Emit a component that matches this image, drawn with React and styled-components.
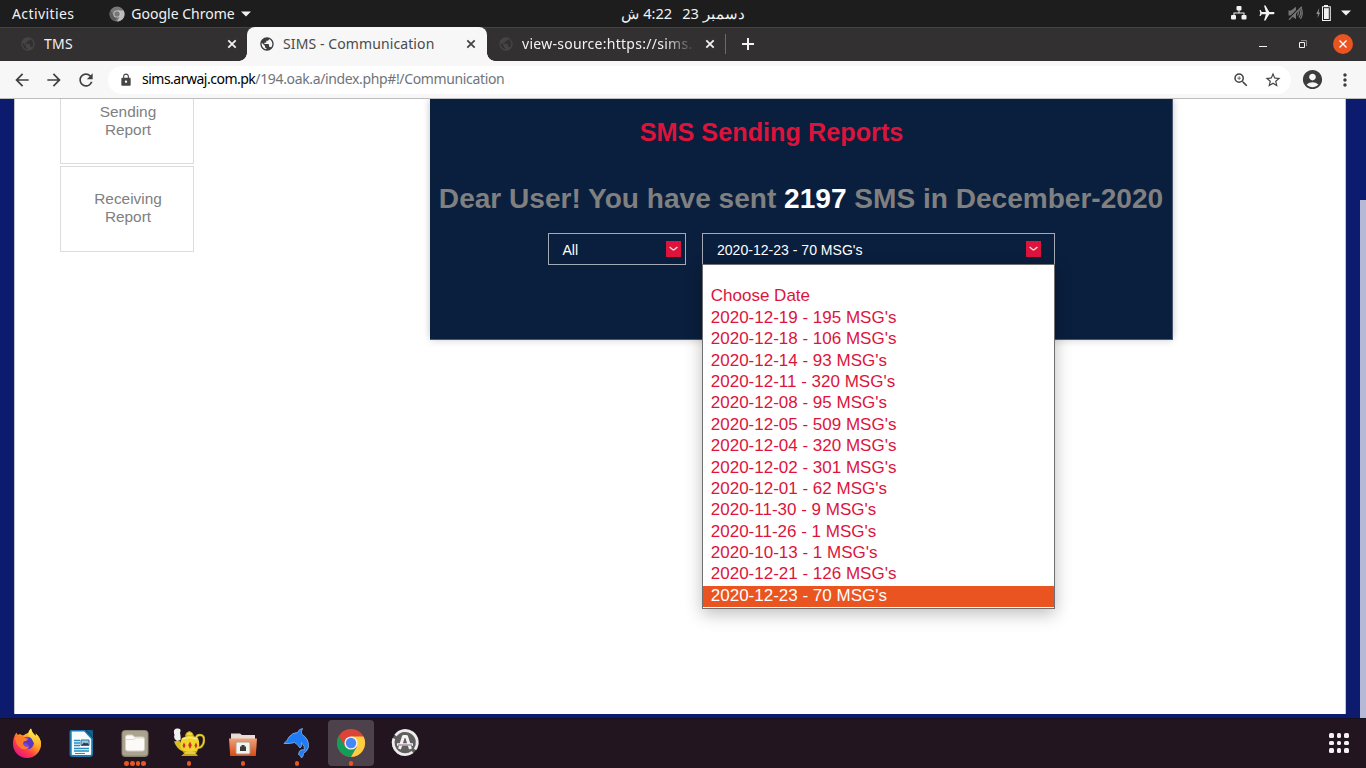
import React from "react";
import styled, { createGlobalStyle } from "styled-components";
import {
  MdPublic, MdArrowBack, MdArrowForward, MdRefresh, MdLock,
  MdZoomIn, MdStarBorder, MdAccountCircle, MdMoreVert, MdAirplanemodeActive,
} from "react-icons/md";

const GlobalStyle = createGlobalStyle`
  * { box-sizing: border-box; }
  html, body { margin: 0; padding: 0; }
  body { width: 1366px; height: 768px; overflow: hidden; font-family: "Liberation Sans", Arial, sans-serif; }
  svg { display: block; flex: none; }
`;

const Desktop = styled.div`
  width: 1366px;
  height: 768px;
  display: grid;
  grid-template-rows: 27px 34px 38px 619px 50px;
  overflow: hidden;
`;

const UiText = styled.span`
  font-family: "Noto Sans", "Open Sans", sans-serif;
  font-size: ${(p) => p.$size || 14}px;
  letter-spacing: ${(p) => p.$spacing || 0}px;
  line-height: 20px;
  color: ${(p) => p.$color || "#f2f2f2"};
  white-space: pre;
`;

/* ---------- system bar ---------- */
const SystemBar = styled.header`
  display: grid;
  grid-template-columns: 1fr auto 1fr;
  background: #1d1d1d;
  height: 27px;
  align-items: center;
`;
const SystemLeft = styled.div`
  display: flex;
  align-items: center;
  padding-left: 12px;
`;
const AppMenu = styled.div`
  display: flex;
  align-items: center;
  margin-left: 35px;
  gap: 6px;
`;
const Clock = styled.div`
  display: flex;
  gap: 10px;
  align-items: center;
  padding-bottom: 1px;
`;
const SystemTray = styled.div`
  display: flex;
  justify-content: flex-end;
  align-items: center;
  padding: 0 15px 1px 0;
`;
const TraySlot = styled.div`
  margin-left: ${(p) => p.$gap}px;
  transform: rotate(${(p) => p.$turn || 0}deg);
`;

/* ---------- tab strip ---------- */
const TabStrip = styled.nav`
  display: flex;
  background: #333031;
  border-top: 1px solid #464344;
`;
const Tab = styled.div`
  position: relative;
  display: flex;
  align-items: center;
  width: ${(p) => p.$width}px;
  padding: 0 ${(p) => p.$right}px ${(p) => (p.$active ? 0 : 1)}px ${(p) => p.$left}px;
  gap: 8px;
  background: ${(p) => (p.$active ? "#f7f7f7" : "transparent")};
  border-radius: 8px 8px 0 0;
  margin-top: ${(p) => (p.$active ? -1 : 0)}px;
  &::before, &::after {
    content: "";
    display: ${(p) => (p.$active ? "block" : "none")};
    position: absolute;
    bottom: 0;
    width: 8px;
    height: 8px;
  }
  &::before { left: -8px; background: radial-gradient(circle at 0 0, transparent 7.5px, #f7f7f7 8px); }
  &::after { right: -8px; background: radial-gradient(circle at 100% 0, transparent 7.5px, #f7f7f7 8px); }
`;
const TabTitle = styled.div`
  flex: 1;
  min-width: 0;
  overflow: hidden;
  display: flex;
  mask-image: ${(p) => (p.$fade ? "linear-gradient(to right, #000 82%, transparent 100%)" : "none")};
`;
const TabDivider = styled.div`
  width: 1px;
  height: 20px;
  margin: 6px 15px 0 0;
  background: #6d6a6b;
`;
const NewTab = styled.div`
  display: flex;
  align-items: center;
  padding-bottom: 1px;
`;
const WindowControls = styled.div`
  display: flex;
  align-items: center;
  margin-left: auto;
  padding: 0 13px 1px 0;
`;
const CloseWindow = styled.div`
  display: flex;
  align-items: center;
  justify-content: center;
  width: 20px;
  height: 20px;
  margin-left: 26px;
  border-radius: 50%;
  background: #e95420;
`;

/* ---------- toolbar ---------- */
const Toolbar = styled.div`
  display: flex;
  align-items: center;
  background: #f7f7f7;
  border-bottom: 1px solid #bdbdbd;
  padding: 0 11px 0 12px;
`;
const NavButtons = styled.div`
  display: flex;
  gap: 12px;
  color: #404040;
`;
const AddressBar = styled.div`
  display: flex;
  align-items: center;
  flex: 1;
  height: 28px;
  margin-left: 12px;
  padding: 0 9px 0 11px;
  border-radius: 14px;
  background: #fff;
  color: #454545;
`;
const Url = styled.div`
  flex: 1;
  display: flex;
  margin-left: 9px;
  padding-bottom: 1px;
`;
const AddressActions = styled.div`
  display: flex;
  align-items: center;
  gap: 14px;
`;
const ToolbarEnd = styled.div`
  display: flex;
  align-items: center;
  gap: 11px;
  margin-left: 10px;
  color: #3c3c3f;
`;

/* ---------- page ---------- */
const Viewport = styled.main`
  display: flex;
  overflow: hidden;
  background: #0c1b6e;
  padding: 0 0 4px 14px;
`;
const Page = styled.div`
  display: flex;
  align-items: flex-start;
  width: 1332px;
  background: #fff;
  border-left: 1px solid #c4c4c4;
  border-right: 1px solid #c4c4c4;
`;
const ScrollTrack = styled.div`
  width: 6px;
  margin: 101px 0 -4px 14px;
  background: #b5b9d6;
`;
const SideMenu = styled.div`
  display: flex;
  flex-direction: column;
  gap: 2px;
  width: 134px;
  margin-left: 45px;
`;
const SideCard = styled.div`
  height: ${(p) => p.$height}px;
  padding: ${(p) => p.$top}px 0 0 2px;
  border: 1px solid #dcdcdc;
  border-top-width: ${(p) => (p.$open ? 0 : 1)}px;
  color: #808080;
  font-size: 15.4px;
  line-height: 18px;
  text-align: center;
  white-space: pre-line;
`;
const Panel = styled.section`
  display: flex;
  flex-direction: column;
  align-items: center;
  width: 743px;
  height: 241px;
  margin-left: 236px;
  background: #0a1f3d;
  border: 1px solid #4b5470;
  border-width: 0 1px 1px 0;
  box-shadow: 0 -4px 8px rgba(0, 0, 0, 0.14), 0 2px 7px rgba(0, 0, 0, 0.1);
`;
const PanelTitle = styled.h2`
  margin: 19px 59px 0 0;
  color: #dc143c;
  font-size: 25.25px;
  line-height: 28px;
`;
const Summary = styled.h1`
  margin: 36px 0 0;
  color: #808080;
  font-size: 28.07px;
  line-height: 34px;
  white-space: nowrap;
`;
const Count = styled.span`
  color: #fff;
`;
const Filters = styled.div`
  display: flex;
  gap: 16px;
  margin-top: 17px;
`;
const Select = styled.div`
  position: relative;
  display: flex;
  align-items: center;
  justify-content: space-between;
  width: ${(p) => p.$width}px;
  height: 32px;
  padding: 1px ${(p) => p.$right}px 0 ${(p) => p.$left}px;
  border: 1px solid #a3a9b5;
  color: #fff;
  font-size: 14.05px;
`;
const Chevron = styled.div`
  display: flex;
  align-items: center;
  justify-content: center;
  width: 15px;
  height: 16px;
  background: #dc143c;
  margin-top: -2px;
`;
const OptionList = styled.div`
  position: absolute;
  top: 30px;
  left: -1px;
  width: 353px;
  height: 345px;
  border: 1px solid #6f6f72;
  background: #fff;
  box-shadow: 0 5px 16px rgba(0, 0, 0, 0.26);
`;
const Option = styled.div`
  height: 21.4px;
  padding-left: 8.3px;
  color: ${(p) => (p.$selected ? "#fff" : "#dc143c")};
  background: ${(p) => (p.$selected ? "#e95420" : "transparent")};
  font-size: 17px;
  line-height: 20px;
`;

/* ---------- dock ---------- */
const Dock = styled.footer`
  display: flex;
  align-items: center;
  background: #22151f;
  border-top: 1px solid #160f1c;
  padding: 0 17px 1px 4px;
`;
const DockItem = styled.div`
  display: flex;
  flex-direction: column;
  align-items: center;
  width: 46px;
  height: 46px;
  margin-right: 8px;
  padding-top: 8px;
  border-radius: 4px;
  background: ${(p) => (p.$active ? "#4d424b" : "transparent")};
`;
const Dots = styled.div`
  display: flex;
  gap: 1px;
  height: 5px;
  margin-top: 3px;
`;
const Dot = styled.i`
  width: 4.6px;
  height: 4.6px;
  border-radius: 50%;
  background: #e95420;
`;
const AppGrid = styled.div`
  display: grid;
  grid-template-columns: repeat(3, 4.6px);
  gap: 3px;
  margin-left: auto;
`;
const GridDot = styled.i`
  width: 4.6px;
  height: 4.6px;
  border-radius: 1.5px;
  background: #f2f0f2;
`;

const Caret = () => (
  <svg width="10" height="6" viewBox="0 0 10 6"><path d="M0 .5h10L5 5.5z" fill="#f2f2f2" /></svg>
);

const CloseIcon = ({ color }) => (
  <svg width="14" height="14" viewBox="0 0 14 14"><path d="m3.300 3.300 7.400 7.400m0-7.400-7.400 7.400" stroke={color} strokeWidth="1.800" /></svg>
);

const GreyChrome = () => (
  <svg width="16" height="16" viewBox="0 0 16 16">
    <circle cx="8" cy="8" r="7.5" fill="#777" />
    <path d="M8 4.5h6.7A7.5 7.5 0 0 1 8 15.5L11 10z" fill="#bdbdbd" />
    <path d="M1.5 4.3 5 10l3 1.5-2 3.7A7.5 7.5 0 0 1 1.5 4.3z" fill="#5c5c5c" />
    <circle cx="8" cy="8" r="3.6" fill="#ccc" />
    <circle cx="8" cy="8" r="2.7" fill="#777" />
  </svg>
);

const NetworkIcon = () => (
  <svg width="16" height="14" viewBox="0 0 16 14" fill="#f2f2f2">
    <rect x="5.5" y="0" width="5" height="4.5" rx="1" />
    <rect x="0" y="9" width="5" height="4.5" rx="1" />
    <rect x="10.5" y="9" width="5" height="4.5" rx="1" />
    <path d="M7.5 4h1v2.5h5V9h-1V7.5h-9V9h-1V6.5h5z" />
  </svg>
);

const MutedIcon = () => (
  <svg width="15" height="14" viewBox="0 0 15 14" fill="none" stroke="#747474" strokeWidth="1.3">
    <path d="M.5 4.5h2.500L8 .8v12.400L3 9.500H.5z" fill="#747474" stroke="none" />
    <path d="M9.500 4.500q1.600 2.500 0 5M11 2.500q3.300 4.500 0 9M12.500.7q3.500 6.300 0 12.200" />
    <path d="M.5 12.500 13 0" stroke="#1d1d1d" strokeWidth="1.200" />
    <path d="M1 13.800 13.800.8" />
  </svg>
);

const BatteryIcon = () => (
  <svg width="15" height="16" viewBox="0 0 15 16">
    <path d="M3.300 3 .2 9h1.800L1.500 13 4.300 7.500H2.700z" fill="#8c8c8c" />
    <path d="M8 0h4v1.200h2.800V16H6V1.200h2z" fill="#f2f2f2" />
    <path d="M7 2.200h6.800V15H7z" fill="#1d1d1d" />
    <path d="M8 3.200h4.800V14H8z" fill="#f2f2f2" />
  </svg>
);

const ChevronIcon = () => (
  <svg width="9" height="5" viewBox="0 0 9 5"><path d="M.6.900 3.600 3.400q.9.700 1.800 0L8.400.9" fill="none" stroke="#f9dde3" strokeWidth="1.300" /></svg>
);

const Firefox = () => (
  <svg width="30" height="30" viewBox="0 0 30 30">
    <defs>
      <linearGradient id="foxBody" x1=".85" y1=".1" x2=".2" y2=".95">
        <stop offset="0" stopColor="#fff14f" /><stop offset=".4" stopColor="#ff9a22" />
        <stop offset=".7" stopColor="#ff3b47" /><stop offset="1" stopColor="#e31587" />
      </linearGradient>
      <linearGradient id="foxTail" x1=".5" y1="0" x2=".5" y2="1">
        <stop offset="0" stopColor="#fff44f" /><stop offset=".6" stopColor="#ffb52c" /><stop offset="1" stopColor="#ff6a35" stopOpacity="0" />
      </linearGradient>
    </defs>
    <path d="M4.500 4.500Q5 8 8 6q1.500 1 3 1.500Q15 5 16 5q1-3 3-4.500Q20 5 24 8q0-1.500-.4-2.500Q29 10 29 16A14 14 0 0 1 1 16Q1 9 4.500 4.500z" fill="url(#foxBody)" />
    <circle cx="15" cy="15" r="6.300" fill="#7542e5" />
    <path d="M10 12q5 1 8-3 4 2 4 6-1 5-5 6 1-5-3-6-3 1-4-3z" fill="#5a38bd" />
    <path d="M3 10q4-3 8-1.500 2 1.500 5 2.500-1 2-4 2.500-2 2 0 4 2 2 5 1-2 4-7 2.500Q4 18 3 10z" fill="#ff7b2c" />
    <path d="M19 .5Q20 5 24 8q0-1.500-.4-2.500Q29 10 29 16q-.5 7-5 10 0-12-7-18-1-4 2-7.500z" fill="url(#foxTail)" />
  </svg>
);

const Writer = () => (
  <svg width="30" height="30" viewBox="0 0 30 30">
    <path d="M5 2h14l8 8v16a3 3 0 0 1-3 3H6.500a3 3 0 0 1-3-3V4a2 2 0 0 1 1.500-2z" fill="#1d78ad" />
    <path d="M5.700 3.500h12.500l7 7.500v15q0 1-1 1H6.700q-1 0-1-1z" fill="#f6fbfd" />
    <path d="M19.500 2H26q1 0 1 1v6.500z" fill="#125e8c" />
    <path d="M8 12.500h6M8 15h6M8 17.500h6M8 20.500h15M8 23h15" stroke="#288dbe" strokeWidth="1.300" />
    <path d="M15 12h8v5.500h-8z" fill="#9cc9e7" stroke="#28709b" />
    <path d="m15.500 17 2.500-2.500 2 1 1-1 2 2.500z" fill="#2a3d49" />
    <path d="M9 25.500h10" stroke="#288dbe" />
  </svg>
);

const Files = () => (
  <svg width="30" height="30" viewBox="0 0 30 30">
    <rect x="1.500" y="2" width="27" height="27" rx="4" fill="#8b8473" />
    <rect x="2.500" y="3" width="25" height="24.500" rx="3" fill="#aaa38f" />
    <path d="M7.500 7h5l2 2h8q2 0 2 2v10q0 2-2 2h-15q-2 0-2-2V9q0-2 2-2z" fill="#fbfaf8" stroke="#d4cfc3" />
    <path d="M6 11.500h8l2-1.500h8" fill="none" stroke="#ddd8cc" />
  </svg>
);

const Teapot = () => (
  <svg width="32" height="30" viewBox="0 0 32 30">
    <path d="M4 13Q0 11 1.500 7-.5 1 4 .5 9 0 7 5q1 3 .5 7z" fill="#f1f1ef" />
    <path d="M23 11q0-4 4-4 4.500 0 4 6-1 7-7 7" fill="none" stroke="#a58c17" strokeWidth="2.500" />
    <path d="M23 11q0-4 4-4 4.500 0 4 6-1 7-7 7" fill="none" stroke="#e8d34a" strokeWidth="1.300" />
    <path d="m1 13.500 5-1 5 6-1 5q-6-2-9-10z" fill="#d9bd24" />
    <path d="M12.500 8q0-4 4-4.500 3.500.5 4 4.500z" fill="#f0dc3c" stroke="#b89610" />
    <path d="M9 10q8-5 16 0 3 7-1 13-7 4-14 0-5-6-1-13z" fill="#efd52f" />
    <path d="M9 22q8 4 16 0l-2 3.500 2 2.500H8l3-2.500z" fill="#c6a516" />
    <path d="m11 14.500 1.500 3-1.500 3-1.500-3zm6-1 1.800 3.800L17 21l-1.800-3.700zm6 1 1.300 3-1.300 3-1.500-3z" fill="#d72b24" />
    <path d="M9 11q8-3 15 0M12 25h10" fill="none" stroke="#fff28a" />
  </svg>
);

const NetFolder = () => (
  <svg width="30" height="30" viewBox="0 0 30 30">
    <defs><linearGradient id="folder" x1="0" x2="0" y1="0" y2="1"><stop stopColor="#eda27c" /><stop offset="1" stopColor="#dc4a12" /></linearGradient></defs>
    <path d="M3 5.500h9l2 1.500h13v21H3z" fill="#e9dcd6" />
    <path d="M1 10.500h28L27.800 28H2.200z" fill="url(#folder)" />
    <rect x="8" y="14" width="14" height="12" rx="1.500" fill="#f4f4ef" stroke="#a5a095" />
    <path d="M12 18.500h1.500V17h3v1.500H18V23h-6z" fill="#3b3b37" />
  </svg>
);

const Dolphin = () => (
  <svg width="30" height="30" viewBox="0 0 30 30">
    <path d="M2 15.500Q5.500 12.500 7 9q3.500-4.500 8.500-4.500Q17 1 20.500.5 18.500 4 20 6.500q7 4 6.500 12.500-1 4-5 6.500 0 3-2 4.500-.5-2.500-3-3.500.5-4 2.500-4.500 2-.5 3.500 0 .5-4-3-7.500 1 4-1.500 5.500-2-3.500-5.500-5.500Q8 16 2 15.500z" fill="#207cf6" stroke="#8bb5d9" strokeWidth=".8" />
  </svg>
);

const Chrome = () => (
  <svg width="30" height="30" viewBox="0 0 30 30">
    <circle cx="15" cy="15" r="14" fill="#db4437" />
    <path d="M2.900 8A14 14 0 0 0 15 29l6-10.500L15 22 9 18.500z" fill="#139d58" />
    <path d="M15 8.500h12.500A14 14 0 0 1 15 29l6-10.500z" fill="#ffcd41" />
    <circle cx="15" cy="15" r="6.600" fill="#f3f3f3" />
    <circle cx="15" cy="15" r="5.200" fill="#4587f4" />
  </svg>
);

const Updater = () => (
  <svg width="30" height="30" viewBox="0 0 30 30">
    <circle cx="15" cy="15" r="13" fill="#5f5f5f" />
    <path d="M5.500 7.500A12 12 0 0 1 25 21.500M22.500 24A12 12 0 0 1 3.800 10.500" fill="none" stroke="#ececec" strokeWidth="2.800" />
    <path d="m9.500 21 4-12.500h3l4 12.500" fill="none" stroke="#f2f2f2" strokeWidth="3" strokeLinejoin="round" />
    <path d="M7 16.500h16" stroke="#f2f2f2" strokeWidth="2.500" />
    <path d="M8 17h14" stroke="#8b4b82" strokeWidth=".9" />
  </svg>
);

const options = [
  " ", "Choose Date", "2020-12-19 - 195 MSG's", "2020-12-18 - 106 MSG's",
  "2020-12-14 - 93 MSG's", "2020-12-11 - 320 MSG's", "2020-12-08 - 95 MSG's",
  "2020-12-05 - 509 MSG's", "2020-12-04 - 320 MSG's", "2020-12-02 - 301 MSG's",
  "2020-12-01 - 62 MSG's", "2020-11-30 - 9 MSG's", "2020-11-26 - 1 MSG's",
  "2020-10-13 - 1 MSG's", "2020-12-21 - 126 MSG's", "2020-12-23 - 70 MSG's",
];

const dockItems = [
  { Icon: Firefox, dots: 0 }, { Icon: Writer, dots: 0 }, { Icon: Files, dots: 4 },
  { Icon: Teapot, dots: 1 }, { Icon: NetFolder, dots: 1 }, { Icon: Dolphin, dots: 1 },
  { Icon: Chrome, dots: 1, active: true }, { Icon: Updater, dots: 0 },
];

export default function App() {
  return (
    <Desktop>
      <GlobalStyle />
      <SystemBar>
        <SystemLeft>
          <UiText $spacing={0.4}>Activities</UiText>
          <AppMenu>
            <GreyChrome />
            <UiText>Google Chrome</UiText>
            <Caret />
          </AppMenu>
        </SystemLeft>
        <Clock>
          <UiText dir="rtl" $size={14.6}>4:22 ش</UiText>
          <UiText dir="rtl" $size={14.6}>دسمبر 23</UiText>
        </Clock>
        <SystemTray>
          <TraySlot $gap={0}><NetworkIcon /></TraySlot>
          <TraySlot $gap={11} $turn={90}><MdAirplanemodeActive size={18} color="#f2f2f2" /></TraySlot>
          <TraySlot $gap={12}><MutedIcon /></TraySlot>
          <TraySlot $gap={12.5}><BatteryIcon /></TraySlot>
          <TraySlot $gap={10.5}><Caret /></TraySlot>
        </SystemTray>
      </SystemBar>

      <TabStrip>
        <Tab $width={247} $left={20} $right={8}>
          <MdPublic size={16} color="#454545" />
          <TabTitle><UiText $spacing={0.3}>TMS</UiText></TabTitle>
          <CloseIcon color="#f2f2f2" />
        </Tab>
        <Tab $active $width={240} $left={12} $right={9}>
          <MdPublic size={16} color="#3c3c3f" />
          <TabTitle><UiText $spacing={0.1} $color="#4a4a4a">SIMS - Communication</UiText></TabTitle>
          <CloseIcon color="#454545" />
        </Tab>
        <Tab $width={238} $left={11} $right={8}>
          <MdPublic size={16} color="#454545" />
          <TabTitle $fade><UiText $spacing={0.27}>view-source:https://sims.</UiText></TabTitle>
          <CloseIcon color="#f2f2f2" />
        </Tab>
        <TabDivider />
        <NewTab>
          <svg width="14" height="14" viewBox="0 0 14 14"><path d="M7 1v12M1 7h12" stroke="#f2f2f2" strokeWidth="2" /></svg>
        </NewTab>
        <WindowControls>
          <svg width="8" height="8" viewBox="0 0 8 8"><path d="M0 6.500h8" stroke="#f2f2f2" /></svg>
          <TraySlot $gap={32}>
            <svg width="8" height="8" viewBox="0 0 8 8" fill="none"><path d="M2 .5h5.500V6" stroke="#8a8889" /><path d="M.5 2.500h5v5h-5z" stroke="#f2f2f2" /></svg>
          </TraySlot>
          <CloseWindow>
            <svg width="8" height="8" viewBox="0 0 8 8"><path d="m.5.500 7 7m0-7-7 7" stroke="#fff" strokeWidth="1.400" /></svg>
          </CloseWindow>
        </WindowControls>
      </TabStrip>

      <Toolbar>
        <NavButtons>
          <MdArrowBack size={20} />
          <MdArrowForward size={20} />
          <MdRefresh size={20} />
        </NavButtons>
        <AddressBar>
          <MdLock size={14} />
          <Url>
            <UiText $spacing={-0.5} $color="#000">sims.arwaj.com.pk</UiText>
            <UiText $spacing={-0.36} $color="#70757a">/194.oak.a/index.php#!/Communication</UiText>
          </Url>
          <AddressActions>
            <MdZoomIn size={18} />
            <MdStarBorder size={18} />
          </AddressActions>
        </AddressBar>
        <ToolbarEnd>
          <MdAccountCircle size={23} />
          <MdMoreVert size={20} />
        </ToolbarEnd>
      </Toolbar>

      <Viewport>
        <Page>
          <SideMenu>
            <SideCard $open $height={65} $top={4}>{"Sending\nReport"}</SideCard>
            <SideCard $height={86} $top={23}>{"Receiving\nReport"}</SideCard>
          </SideMenu>
          <Panel>
            <PanelTitle>SMS Sending Reports</PanelTitle>
            <Summary>Dear User! You have sent <Count>2197</Count> SMS in December-2020</Summary>
            <Filters>
              <Select $width={138} $left={14} $right={4}>
                All
                <Chevron><ChevronIcon /></Chevron>
              </Select>
              <Select $width={353} $left={14.5} $right={12.5}>
                2020-12-23 - 70 MSG's
                <Chevron><ChevronIcon /></Chevron>
                <OptionList>
                  {options.map((text, i) => (
                    <Option key={i} $selected={i === options.length - 1}>{text}</Option>
                  ))}
                </OptionList>
              </Select>
            </Filters>
          </Panel>
        </Page>
        <ScrollTrack />
      </Viewport>

      <Dock>
        {dockItems.map(({ Icon, dots, active }, i) => (
          <DockItem key={i} $active={active}>
            <Icon />
            <Dots>{Array.from({ length: dots }, (_, d) => <Dot key={d} />)}</Dots>
          </DockItem>
        ))}
        <AppGrid>{Array.from({ length: 9 }, (_, i) => <GridDot key={i} />)}</AppGrid>
      </Dock>
    </Desktop>
  );
}
